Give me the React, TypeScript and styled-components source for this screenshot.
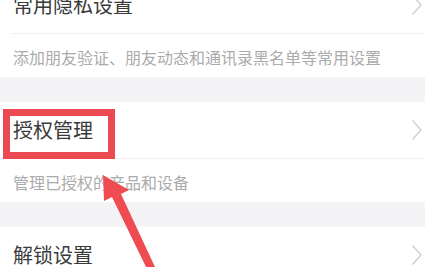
import React from "react";
import styled, { createGlobalStyle } from "styled-components";

const Global = createGlobalStyle`
  html, body { margin: 0; padding: 0; background: #ffffff; }
  body { font-family: "Noto Sans CJK SC", "Noto Sans", sans-serif; overflow: hidden; }
`;

const Page = styled.div`
  position: relative;
  width: 425px;
  height: 267px;
  overflow: hidden;
  background: #ffffff;
`;

const List = styled.div`
  display: flex;
  flex-direction: column;
  margin-top: -23px;
`;

const Group = styled.div`
  display: flex;
  flex-direction: column;
  background: #ffffff;
`;

const Row = styled.div`
  position: relative;
  display: flex;
  align-items: center;
  justify-content: space-between;
  height: 56px;
  padding: 0 2px 0 13px;
  box-sizing: border-box;
`;

const Title = styled.span`
  font-size: 20px;
  line-height: 1;
  color: #3a3a3a;
`;

const Divider = styled.div`
  height: 1px;
  margin-left: 10px;
  background: #f1f1f3;
`;

const Desc = styled.div`
  display: flex;
  align-items: center;
  height: 43px;
  box-sizing: border-box;
  padding: 3px 0 0 13px;
  font-size: 16px;
  color: #ababab;
`;

const Band = styled.div`
  height: 25px;
  background: #f4f4f6;
`;

const Highlight = styled.div`
  position: absolute;
  left: 3px;
  top: 7px;
  width: 112px;
  height: 50px;
  box-sizing: border-box;
  border: 7px solid #ec4a52;
  pointer-events: none;
`;

const ArrowSvg = styled.svg`
  position: absolute;
  left: 0;
  top: 0;
  pointer-events: none;
`;

const Chevron = () => (
  <svg width="12" height="22" viewBox="0 0 12 22">
    <path d="M1.5 1.5 L10 11 L1.5 20.5" fill="none" stroke="#cfcfcf" strokeWidth="1.4" />
  </svg>
);

export default function App() {
  return (
    <>
      <Global />
      <Page>
        <List>
          <Group>
            <Row>
              <Title>常用隐私设置</Title>
              <Chevron />
            </Row>
            <Divider />
            <Desc>添加朋友验证、朋友动态和通讯录黑名单等常用设置</Desc>
          </Group>
          <Band />
          <Group>
            <Row>
              <Title>授权管理</Title>
              <Chevron />
              <Highlight />
            </Row>
            <Divider />
            <Desc>管理已授权的产品和设备</Desc>
          </Group>
          <Band />
          <Group>
            <Row>
              <Title>解锁设置</Title>
              <Chevron />
            </Row>
          </Group>
        </List>
        <ArrowSvg width="425" height="267" viewBox="0 0 425 267">
          <polygon
            points="103,175 129,190 121,194 155,267 146,267 112,197 104,201"
            fill="#ef4b52"
          />
        </ArrowSvg>
      </Page>
    </>
  );
}
